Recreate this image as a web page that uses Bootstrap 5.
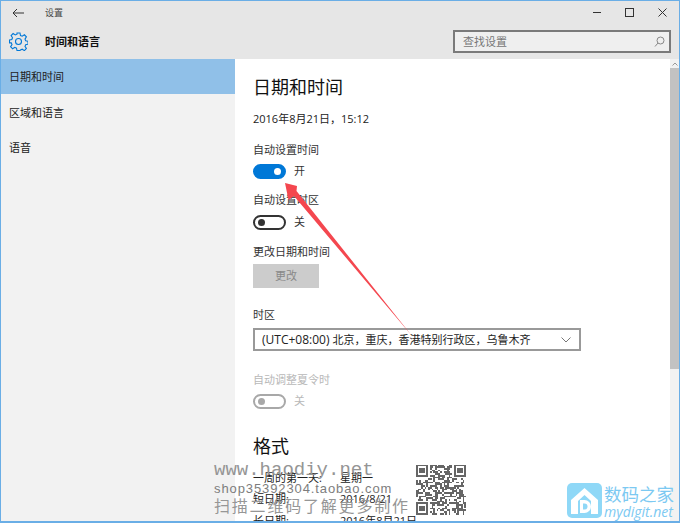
<!DOCTYPE html>
<html lang="zh-CN">
<head>
    <meta charset="UTF-8">
    <meta name="viewport" content="width=device-width, initial-scale=1.0">
    <title>设置</title>
    <link href="https://cdn.jsdelivr.net/npm/bootstrap@5.3.0/dist/css/bootstrap.min.css" rel="stylesheet">
    <style>
        html, body { height: 100%; overflow: hidden; }
        body { font-family: "Open Sans", "Noto Sans CJK SC", sans-serif; font-size: 11px; line-height: 16px; color: #222; background: #fff; }
        .win { position: relative; width: 680px; height: 523px; overflow: hidden; border-top: 1px solid #6aaee6; border-left: 1px solid #6aaee6; border-right: 1px solid #6aaee6; }
        .win-bottom { position: absolute; left: 0; right: 0; top: 520px; height: 2px; background: #6aaee6; }
        .head { height: 58px; background: #e6e6e6; }
        .head-top { height: 23px; padding-left: 11px; }
        .head-name { margin-left: 21px; color: #444; font-size: 9px; }
        .head-btn { width: 33px; height: 23px; }
        .head-row { height: 35px; padding-left: 8px; }
        .head-title { margin-left: 17px; font-size: 11px; font-weight: 700; color: #111; }
        .search-box { width: 218px; height: 23px; margin-right: 8px; border: 2px solid #7a7a7a; background: #efefef; padding: 0 4px 0 8px; color: #777; font-size: 11px; }
        .body-row { height: 464px; }
        .side { width: 234px; background: #f2f2f2; }
        .side-item { height: 35px; padding-left: 8px; font-size: 11px; color: #222; }
        .side-item.on { background: #90c0e8; margin-bottom: 1px; }
        .main { width: 435px; padding: 17px 0 0 18px; }
        .big { font-size: 18px; line-height: 22px; color: #111; }
        .date-line { margin-top: 13px; font-size: 11px; line-height: 16px; }
        .lbl { color: #333; font-size: 11px; line-height: 16px; }
        .gap-a { margin-top: 15px; }
        .gap-b { margin-top: 13px; }
        .gap-c { margin-top: 14px; }
        .gap-d { margin-top: 19px; }
        .gap-e { margin-top: 21px; }
        .tog { width: 33px; height: 15px; border-radius: 8px; border: 2px solid #333; position: relative; }
        .tog::after { content: ""; position: absolute; top: 2px; left: 3px; width: 7px; height: 7px; border-radius: 50%; background: #333; }
        .tog.on { background: #0078d7; border-color: #0078d7; }
        .tog.on::after { left: auto; right: 3px; background: #fff; }
        .tog.off { border-color: #a8a8a8; }
        .tog.off::after { background: #a8a8a8; }
        .tog-row { gap: 8px; height: 16px; margin-top: 5px; font-size: 11px; color: #333; }
        .tog-row.wide { margin-top: 6px; }
        .change-btn { width: 66px; height: 24px; margin-top: 4px; background: #ccc; color: #888; font-size: 11px; border: 0; }
        .zone { width: 328px; height: 23px; margin-top: 5px; border: 2px solid #999; padding: 0 8px 0 7px; font-size: 12px; color: #222; }
        .zone-cjk { font-size: 11px; }
        .dim { color: #b8b8b8; }
        .fmt-title { margin-top: 26px; }
        .fmt-first { margin-top: 10px; }
        .fmt-key { width: 87px; }
        .fmt-row { height: 21.5px; font-size: 11px; color: #222; }
        .scroll { width: 9px; background: #f2f2f2; }
        .scroll-arrow { height: 9px; color: #999; }
        .scroll-thumb { height: 301px; background: #c2c2c2; }
        .arrow-over { position: absolute; left: -1px; top: -1px; pointer-events: none; }
        .mark-txt { position: absolute; left: 213px; white-space: nowrap; color: #7d7d7d; }
        .mark-a { top: 458px; font: 19px/22px "Liberation Mono", monospace; color: #959595; }
        .mark-b { top: 480px; font: 13px/15px "Liberation Sans", sans-serif; letter-spacing: .9px; }
        .mark-c { top: 493px; font: 16px/22px "Noto Sans CJK SC", serif; letter-spacing: 1.8px; color: #969696; }
        .qr { position: absolute; left: 415px; top: 463px; }
        .logo { position: absolute; left: 566px; top: 482px; }
        .logo-cn { position: absolute; left: 603px; top: 483px; font-size: 17.5px; line-height: 20px; color: #7cc9f2; white-space: nowrap; }
        .logo-en { position: absolute; left: 603px; top: 503px; font-size: 14px; line-height: 16px; font-style: italic; color: #7cc9f2; white-space: nowrap; }
    </style>
</head>
<body>
<div class="win">
    <!-- 标题栏 -->
    <div class="head">
        <div class="head-top d-flex align-items-center">
            <svg width="12" height="10" viewBox="0 0 12 10" fill="none" stroke="#333"><path d="M12 5H1M5 1 1 5l4 4"/></svg>
            <span class="head-name">设置</span>
            <div class="d-flex ms-auto">
                <div class="head-btn d-flex align-items-center justify-content-center"><svg width="9" height="9" stroke="#333"><path d="M1 4.500h8"/></svg></div>
                <div class="head-btn d-flex align-items-center justify-content-center"><svg width="9" height="9" fill="none" stroke="#333"><rect x=".5" y=".5" width="8" height="8"/></svg></div>
                <div class="head-btn d-flex align-items-center justify-content-center"><svg width="9" height="9" stroke="#333"><path d="M.5.5l8 8M8.500.5l-8 8"/></svg></div>
            </div>
        </div>
        <div class="head-row d-flex align-items-center">
            <svg width="19" height="19" viewBox="0 0 19 19" fill="none" stroke="#0078d7" stroke-width="1.1"><circle cx="9.500" cy="9.500" r="3"/><path d="M8 1h3l.5 2.500 1.700.7 2.200-1.400 2 2.100-1.400 2.200.7 1.700 2.300.400v3l-2.300.5-.7 1.700 1.400 2.100-2 2.100-2.200-1.400-1.700.7L11 18.500H8l-.5-2.400-1.700-.7-2.200 1.400-2-2.100 1.400-2.100-.7-1.700L.5 10.900V8l2.300-.5.700-1.700L2.100 3.600l2-2.100 2.200 1.400 1.700-.7z"/></svg>
            <span class="head-title">时间和语言</span>
            <div class="search-box d-flex align-items-center justify-content-between ms-auto">
                <span>查找设置</span>
                <svg width="11" height="11" viewBox="0 0 11 11" fill="none" stroke="#888"><circle cx="6.500" cy="4.500" r="3.500"/><path d="M4 7 1 10.500"/></svg>
            </div>
        </div>
    </div>
    <div class="body-row d-flex">
        <!-- 左侧菜单 -->
        <div class="side">
            <div class="side-item on d-flex align-items-center">日期和时间</div>
            <div class="side-item d-flex align-items-center">区域和语言</div>
            <div class="side-item d-flex align-items-center">语音</div>
        </div>
        <!-- 内容 -->
        <div class="main">
            <div class="big">日期和时间</div>
            <div class="date-line">2016年8月21日，15:12</div>
            <div class="lbl gap-a">自动设置时间</div>
            <div class="tog-row d-flex align-items-center"><div class="tog on"></div><span>开</span></div>
            <div class="lbl gap-b">自动设置时区</div>
            <div class="tog-row wide d-flex align-items-center"><div class="tog"></div><span>关</span></div>
            <div class="lbl gap-c">更改日期和时间</div>
            <button class="change-btn d-block">更改</button>
            <div class="lbl gap-d">时区</div>
            <div class="zone d-flex align-items-center justify-content-between">
                <span>(UTC+08:00) <span class="zone-cjk">北京，重庆，香港特别行政区，乌鲁木齐</span></span>
                <svg width="10" height="6" fill="none" stroke="#777"><path d="M.5.5 5 5 9.500.5"/></svg>
            </div>
            <div class="lbl dim gap-e">自动调整夏令时</div>
            <div class="tog-row d-flex align-items-center dim"><div class="tog off"></div><span>关</span></div>
            <div class="big fmt-title">格式</div>
            <div class="fmt-row fmt-first d-flex align-items-center"><span class="fmt-key">一周的第一天:</span><span>星期一</span></div>
            <div class="fmt-row d-flex align-items-center"><span class="fmt-key">短日期:</span><span>2016/8/21</span></div>
            <div class="fmt-row d-flex align-items-center"><span class="fmt-key">长日期:</span><span>2016年8月21日</span></div>
        </div>
        <div class="scroll">
            <div class="scroll-arrow d-flex justify-content-center align-items-center"><svg width="6" height="4" fill="none" stroke="#999"><path d="M.5 3.500 3 1l2.500 2.500"/></svg></div>
            <div class="scroll-thumb"></div>
        </div>
    </div>
    <!-- 红色箭头 -->
    <svg class="arrow-over" width="680" height="523" viewBox="0 0 680 523">
        <path d="M285 183 297 186 296.500 191 412 336 294 196 288.500 200z" fill="#f4474f"/>
    </svg>
    <!-- 水印 -->
    <div class="mark-txt mark-a">www.haodiy.net</div>
    <div class="mark-txt mark-b">shop35392304.taobao.com</div>
    <div class="mark-txt mark-c">扫描二维码了解更多制作</div>
    <svg class="qr" id="qr" width="50" height="51" viewBox="0 0 29 29" fill="#666" shape-rendering="crispEdges"></svg>
    <svg class="logo" width="36" height="36" viewBox="0 0 36 36">
        <rect width="35" height="35" rx="5" fill="#8fd8f7"/>
        <path d="M4 17 17.500 5 31 17v14H24V18L17.500 12 11 18V31H4z" fill="#fff"/>
        <path d="M13 17h4.500a6 6 0 0 1 0 13H13z" fill="#fff"/>
        <path d="M16 20.500h1.500a2.800 2.800 0 0 1 0 6H16z" fill="#8fd8f7"/>
    </svg>
    <div class="logo-cn">数码之家</div>
    <div class="logo-en">mydigit.net</div>
    <div class="win-bottom"></div>
</div>
<script>
    // 二维码水印的格子
    const qr = document.getElementById('qr');
    const n = 29;
    let d = '';
    const finder = (x, y) => { d += `M${x} ${y}h7v7h-7zM${x+1} ${y+1}v5h5v-5zM${x+2} ${y+2}h3v3h-3z`; };
    let seed = 7;
    const rnd = () => { seed = (seed * 73 + 41) % 1009; return seed % 2 === 0; };
    for (let y = 0; y < n; y++) {
        for (let x = 0; x < n; x++) {
            const inFinder = (x < 8 && y < 8) || (x > 20 && y < 8) || (x < 8 && y > 20);
            if (!inFinder && rnd()) d += `M${x} ${y}h1v1h-1z`;
        }
    }
    finder(0, 0); finder(22, 0); finder(0, 22);
    qr.innerHTML = `<path fill-rule="evenodd" d="${d}"/>`;
</script>
<script src="https://cdn.jsdelivr.net/npm/bootstrap@5.3.0/dist/js/bootstrap.bundle.min.js"></script>
</body>
</html>
